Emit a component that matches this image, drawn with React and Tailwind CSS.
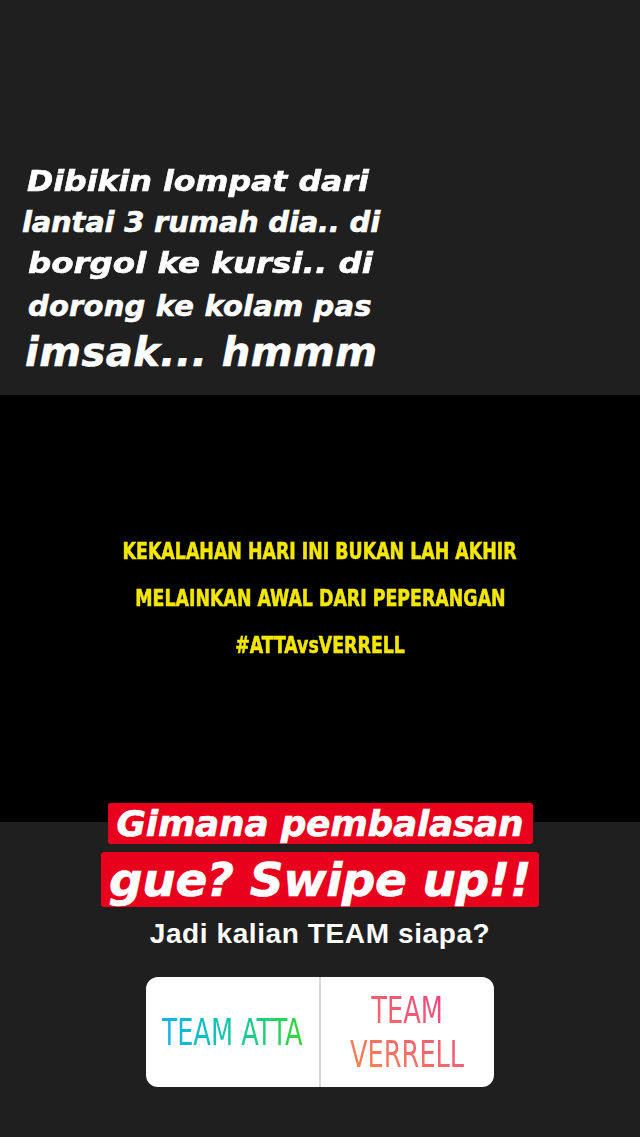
import React from 'react';

const strong = { fontFamily: '"DejaVu Sans", "Liberation Sans", sans-serif' };
const narrow = { fontFamily: '"DejaVu Sans Condensed", "Liberation Sans", sans-serif' };

function App() {
  return (
    <div className="w-[640px] h-[1137px] bg-[#1f1f1f] overflow-hidden flex flex-col">
      {/* Caption */}
      <section className="h-[395px] shrink-0 flex flex-col pt-[161px] text-white italic font-bold whitespace-nowrap [-webkit-text-stroke:0.6px_#fff]" style={strong}>
        <div className="text-[29px] leading-[41px] pl-[27px]">
          <span className="inline-block origin-left scale-x-[1.09]">Dibikin lompat dari</span>
        </div>
        <div className="text-[29px] leading-[41px] tracking-[-0.2px] pl-[22px]">lantai 3 rumah dia.. di</div>
        <div className="text-[29px] leading-[41px] pl-[28px]">
          <span className="inline-block origin-left scale-x-[1.12]">borgol ke kursi.. di</span>
        </div>
        <div className="text-[29px] leading-[44px] tracking-[0.2px] pl-[28px]">dorong ke kolam pas</div>
        <div className="text-[40px] leading-[48px] tracking-[0.5px] pl-[25px]">imsak... hmmm</div>
      </section>

      {/* Video frame */}
      <section className="h-[427px] shrink-0 bg-black flex flex-col items-center justify-center gap-[14px] pb-[20px] text-[#f3e600] font-bold [-webkit-text-stroke:0.5px_#f3e600]" style={narrow}>
        <div className="text-[23px] leading-[33px] whitespace-nowrap scale-x-[0.84]">KEKALAHAN HARI INI BUKAN LAH AKHIR</div>
        <div className="text-[23px] leading-[33px] whitespace-nowrap scale-x-[0.84]">MELAINKAN AWAL DARI PEPERANGAN</div>
        <div className="text-[23px] leading-[33px] whitespace-nowrap scale-x-[0.84]">#ATTAvsVERRELL</div>
      </section>

      {/* Question + poll */}
      <section className="relative z-10 -mt-[19px] flex flex-col items-center">
        <div className="flex flex-col items-center gap-[8px] italic font-bold text-white [-webkit-text-stroke:0.6px_#fff]" style={strong}>
          <div className="bg-[#e8001c] rounded-[3px] h-[41px] w-[425px] flex items-center justify-center text-[36px] leading-[41px] tracking-[-0.3px] whitespace-nowrap">Gimana pembalasan</div>
          <div className="bg-[#e8001c] rounded-[3px] h-[55px] w-[438px] flex items-center justify-center text-[47px] leading-[55px] tracking-[-0.4px] whitespace-nowrap">gue? Swipe up!!</div>
        </div>
        <div className="mt-[10px] text-white font-bold text-[28px] leading-[34px] tracking-[0.6px]" style={{ fontFamily: '"Liberation Sans", Arial, sans-serif' }}>Jadi kalian TEAM siapa?</div>

        <div className="mt-[26px] w-[348px] h-[110px] bg-white rounded-[12px] grid grid-cols-[1fr_2px_1fr] overflow-hidden" style={narrow}>
          <div className="min-w-0 flex items-center justify-center">
            <span className="whitespace-nowrap text-[38px] leading-[40px] scale-x-[0.75] bg-gradient-to-r from-[#17b2ec] to-[#33d62c] bg-clip-text text-transparent">TEAM ATTA</span>
          </div>
          <div className="bg-[#d4d4d4]" />
          <div className="min-w-0 flex items-center justify-center">
            <span className="whitespace-nowrap text-center text-[38px] leading-[44px] scale-x-[0.75] bg-gradient-to-tr from-[#f5894a] to-[#ee2f84] bg-clip-text text-transparent">TEAM<br />VERRELL</span>
          </div>
        </div>
      </section>
    </div>
  );
}

export default App;
